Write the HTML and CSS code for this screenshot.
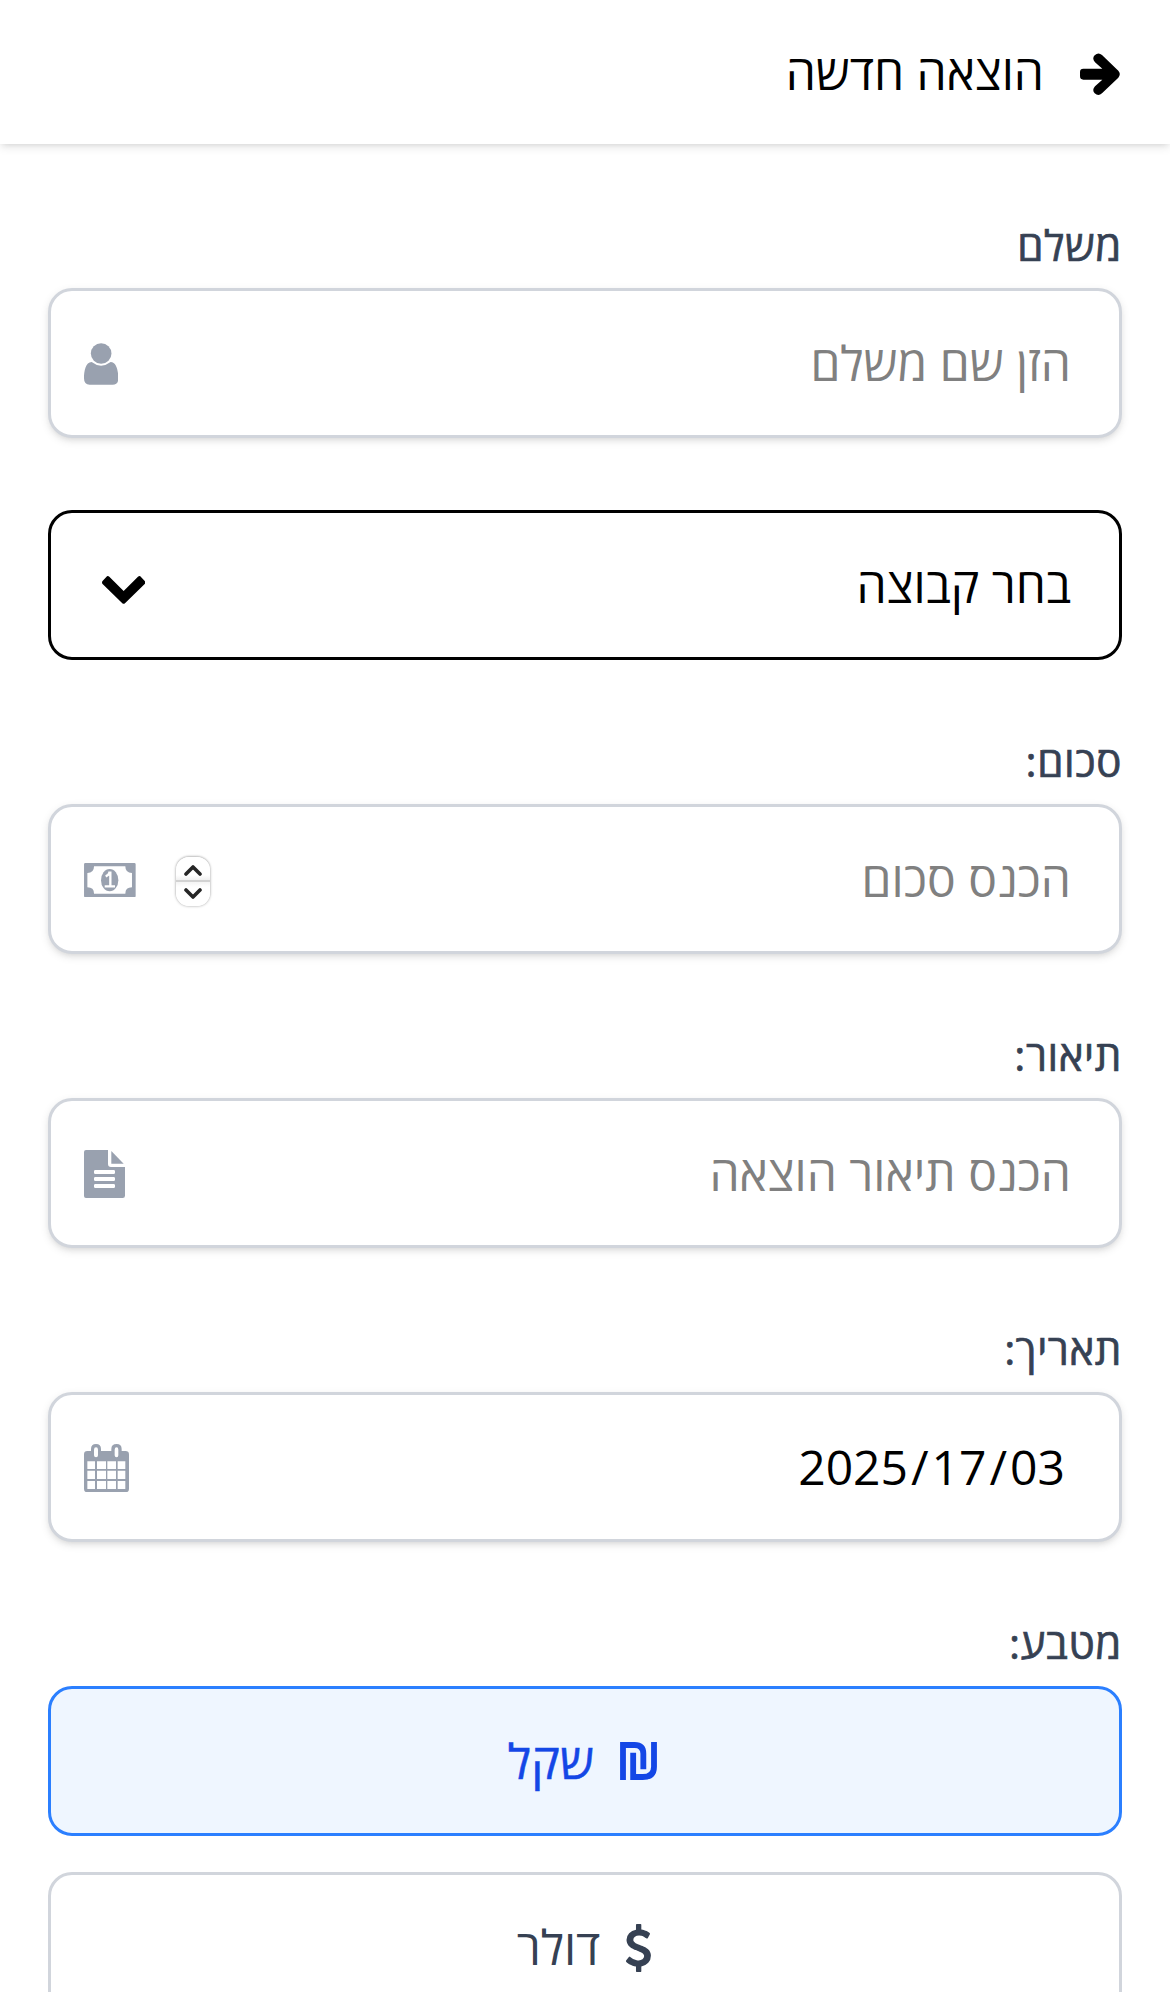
FILE: index.html
```html
<!DOCTYPE html>
<html lang="he" dir="rtl">
<head>
<meta charset="utf-8">
<title>הוצאה חדשה</title>
<link rel="stylesheet" href="styles.css">
</head>
<body>
<header class="header">
  <svg class="back-icon" viewBox="930 160 120 127"><path d="M940 207H997L975 188Q965 177 974 167Q985 156 996 166L1045 213Q1054 223 1045 234L996 281Q985 291 974 281Q965 271 975 260L997 240H940Q930 240 930 230V217Q930 207 940 207Z"/></svg>
  <h1 class="title">הוצאה חדשה</h1>
</header>
<main class="form">
  <section class="group">
    <div class="label">משלם</div>
    <div class="field">
      <span class="placeholder">הזן שם משלם</span>
      <svg class="user-icon" viewBox="252 219 103 125"><circle cx="303.500" cy="250.500" r="31"/><path d="M275 276Q303 298 332 276C350 276 355 304 355 325Q355 344 338 344H269Q252 344 252 325C252 304 257 276 275 276Z"/></svg>
    </div>
  </section>
  <div class="field select">
    <span>בחר קבוצה</span>
    <svg class="chevron-icon" viewBox="304 917 130 84"><path d="M319 918Q322 916 326 919L369 962L412 919Q416 916 419 918L433 933Q435 937 433 940L373 999Q369 1002 365 999L305 940Q303 937 305 933Z"/></svg>
  </div>
  <section class="group">
    <div class="label">סכום:</div>
    <div class="field">
      <span class="placeholder">הכנס סכום</span>
      <div class="amount-tools">
        <div class="stepper">
          <svg class="step" viewBox="0 0 18 12"><path d="M2 10L9 3L16 10"/></svg>
          <svg class="step" viewBox="0 0 18 12"><path d="M2 2L9 9L16 2"/></svg>
        </div>
        <svg class="money-icon" viewBox="132 218 155 103"><path fill-rule="evenodd" d="M136 218H283Q287 218 287 222V317Q287 321 283 321H136Q132 321 132 317V222Q132 218 136 218ZM162 228Q162 248 142 248V291Q162 291 162 310H256Q256 291 276 291V248Q256 248 256 228Z"/><ellipse cx="209" cy="269.500" rx="26" ry="33.500"/><path class="bill-mark" d="M197 258Q207 254 208 247H211V288M194 288H225"/></svg>
      </div>
    </div>
  </section>
  <section class="group">
    <div class="label">תיאור:</div>
    <div class="field">
      <span class="placeholder">הכנס תיאור הוצאה</span>
      <svg class="file-icon" viewBox="132 180 123 144"><path fill-rule="evenodd" d="M138 180H204V222Q204 231 213 231H255V317Q255 324 248 324H138Q132 324 132 318V186Q132 180 138 180ZM166 240Q162 240 162 244V248Q162 252 166 252H221Q225 252 225 248V244Q225 240 221 240ZM166 261Q162 261 162 265V269Q162 273 166 273H221Q225 273 225 269V265Q225 261 221 261ZM166 282Q162 282 162 286V290Q162 294 166 294H221Q225 294 225 290V286Q225 282 221 282Z"/><path d="M214 183L251 221H214Z"/></svg>
    </div>
  </section>
  <section class="group">
    <div class="label">תאריך:</div>
    <div class="field">
      <span class="date" dir="ltr">2025<span class="slash">/</span>17<span class="slash">/</span>03</span>
      <svg class="calendar-icon" viewBox="132 1061 135 145"><path fill-rule="evenodd" d="M142 1082H153V1076Q153 1061 168 1061Q183 1061 183 1076V1082H214V1076Q214 1061 230 1061Q245 1061 245 1076V1082H256Q267 1082 267 1092V1196Q267 1206 257 1206H142Q132 1206 132 1196V1092Q132 1082 142 1082ZM162 1078V1095Q162 1101 168 1101Q174 1101 174 1095V1078Q174 1071 168 1071Q162 1071 162 1078ZM224 1078V1095Q224 1101 230 1101Q235 1101 235 1095V1078Q235 1071 230 1071Q224 1071 224 1078ZM142 1113V1136H165V1113ZM171 1113V1136H198V1113ZM202 1113V1136H228V1113ZM233 1113V1136H256V1113ZM142 1141V1166H165V1141ZM171 1141V1166H198V1141ZM202 1141V1166H228V1141ZM233 1141V1166H256V1141ZM142 1172V1196H165V1172ZM171 1172V1196H198V1172ZM202 1172V1196H228V1172ZM233 1172V1196H256V1172Z"/></svg>
    </div>
  </section>
  <section class="group">
    <div class="label">מטבע:</div>
    <div class="options">
      <div class="option selected">
        <svg class="shekel-icon" viewBox="420 183 111 114"><path d="M429 297V192H464Q490 192 490 218V265M459.500 215V288H488Q522 288 522 257V183"/></svg>
        <span class="selected-text">שקל</span>
      </div>
      <div class="option">
        <svg class="dollar-icon" viewBox="50 0 930 1792"><path d="M978 1185q0 153-99.500 263.500T620 1585v175q0 14-9 23t-23 9H453q-13 0-22.500-9.500T421 1760v-175q-66-9-127.500-31T192 1509.500t-74-48-46.500-37.500-17.500-18q-17-21-2-41l103-135q7-10 23-12 15-2 24 9l2 2q113 99 243 125 37 8 74 8 81 0 142.500-43t61.500-122q0-28-15-53t-33.500-42-58.500-37.500-66-32-80-32.500q-39-16-61.500-25T349 948.500t-62.500-31T230 882t-53.500-42.500-43.500-49-35.500-58-21-66.500-8.500-78q0-138 98-242t255-134V32q0-13 9.500-22.500T453 0h135q14 0 23 9t9 23v176q57 6 110.500 23t87 33.500T881 302t39 29 15 14q17 18 5 38l-81 146q-8 15-23 16-14 3-27-7-3-3-14.500-12t-39-26.500-58.500-32-74.500-26T537 430q-95 0-155 43t-60 111q0 26 8.500 48t29.500 41.500 39.500 33 56 31T516 765t70 27q53 20 81 31.500t76 35 75.500 42.500 62 50 53 63.500 31.500 76.500 13 94z"/></svg>
        <span>דולר</span>
      </div>
    </div>
  </section>
</main>
</body>
</html>
```
FILE: styles.css
```css
* { box-sizing: border-box; }
html { overflow: hidden; }
body {
  margin: 0;
  height: 1992px;
  overflow: hidden;
  background: #fff;
  color: #000;
  font-family: "Open Sans", "Noto Sans", sans-serif;
  font-size: 48px;
  line-height: 72px;
}
svg { display: block; flex: none; fill: currentColor; }
.header {
  display: flex;
  align-items: center;
  gap: 36px;
  height: 144px;
  padding: 0 50px;
  box-shadow: 0 3px 9px rgba(0, 0, 0, .1), 0 3px 6px -3px rgba(0, 0, 0, .1);
}
.title { margin: 0; font-size: 48px; font-weight: 400; }
.back-icon { width: 40px; height: 42.300px; margin-top: 5px; }
.form { display: flex; flex-direction: column; gap: 72px; padding: 72px 48px 0; }
.group { display: flex; flex-direction: column; gap: 12px; }
.label {
  height: 60px;
  font-size: 42px;
  font-weight: 500;
  line-height: 58px;
  letter-spacing: .6px;
  color: #364153;
  -webkit-text-stroke: .7px currentColor;
}
.field {
  display: flex;
  align-items: center;
  justify-content: space-between;
  height: 150px;
  padding: 0 33px;
  border: 3px solid #d1d5dc;
  border-radius: 24px;
  background: #fff;
  color: #99a1af;
  box-shadow: 0 3px 9px rgba(0, 0, 0, .1), 0 3px 6px -3px rgba(0, 0, 0, .1);
}
.select { border-color: #000; color: #000; box-shadow: none; }
.field > span { margin-right: 15px; }
.field > .date { margin-right: 21px; color: #000; }
.slash { margin: 0 3px; }
.field > .placeholder { color: #808080; }
.user-icon { width: 34.300px; height: 41.700px; margin-top: 2px; }
.chevron-icon { width: 43.300px; height: 28px; margin: 9px 0 0 18px; }
.money-icon { width: 51.700px; height: 34.300px; margin-top: 2px; }
.file-icon { width: 41px; height: 48px; margin-top: 2px; }
.calendar-icon { width: 45px; height: 48.300px; margin-top: 2px; }
.bill-mark { fill: none; stroke: #fff; stroke-width: 7; }
.amount-tools { display: flex; align-items: center; gap: 40.500px; }
.stepper {
  display: flex;
  flex-direction: column;
  width: 34px;
  height: 49px;
  margin-top: 5px;
  border-radius: 13px;
  color: #262626;
  background: linear-gradient(#fff 0, #fff 18px, #f0f0f0 23px, #d2d2d2 23px, #d2d2d2 25px, #f4f4f4 25px, #fff 30px);
  box-shadow: 0 0 3px rgba(0, 0, 0, .36), 0 -1px 2px rgba(0, 0, 0, .1);
}
.step { width: 18px; height: 12px; margin: 6.500px auto 5.500px; fill: none; stroke: currentColor; stroke-width: 3.600; stroke-linecap: round; stroke-linejoin: round; }
.options { display: flex; flex-direction: column; gap: 36px; }
.option {
  display: flex;
  align-items: center;
  justify-content: center;
  gap: 26px;
  height: 150px;
  border: 3px solid #d1d5dc;
  border-radius: 24px;
  color: #364153;
}
.selected { border-color: #2b7fff; background: #eff6ff; color: #1447e6; }
.selected-text { letter-spacing: .3px; -webkit-text-stroke: .5px currentColor; }
.shekel-icon { width: 37px; height: 38px; margin-right: 5px; fill: none; stroke: currentColor; stroke-width: 17.500; }
.dollar-icon { width: 25px; height: 48px; margin: 2px 2px 0 0; }
```
